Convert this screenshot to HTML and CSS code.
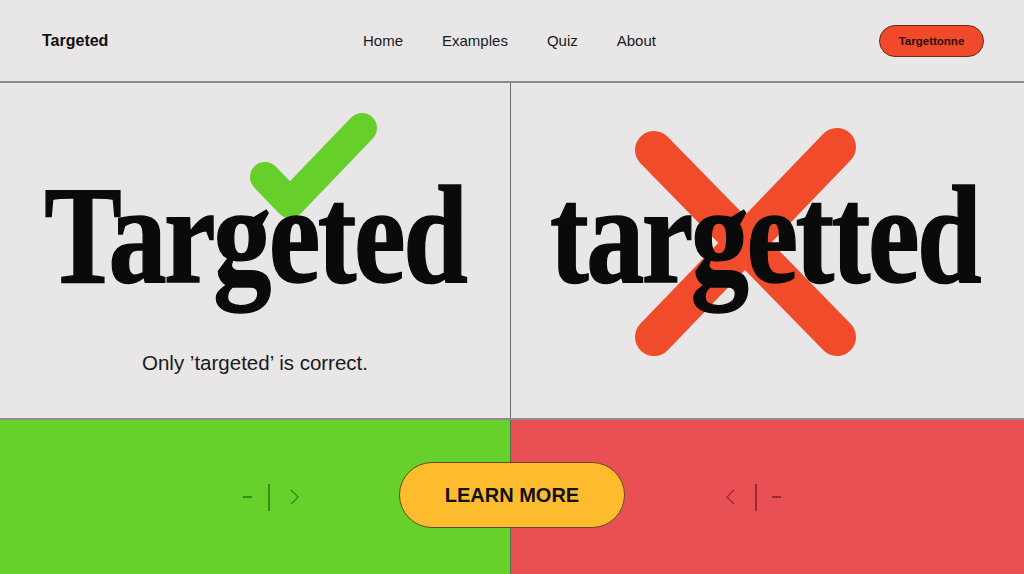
FILE: index.html
```html
<!DOCTYPE html>
<html>
<head>
<meta charset="utf-8">
<link rel="stylesheet" href="styles.css">
</head>
<body>
<div class="page">
  <header class="topbar">
    <div class="brand">Targeted</div>
    <nav class="nav">
      <a>Home</a>
      <a>Examples</a>
      <a>Quiz</a>
      <a>About</a>
    </nav>
    <div class="cta">Targettonne</div>
  </header>
  <main class="panels">
    <section class="panel left">
      <svg class="mark check" viewBox="0 0 160 130" width="160" height="130">
        <path d="M35 84 L60 110 L132 35" fill="none" stroke="#66cf2a" stroke-width="30" stroke-linecap="round" stroke-linejoin="round"/>
      </svg>
      <div class="word">Targeted</div>
      <p class="caption">Only ’targeted’ is correct.</p>
    </section>
    <section class="panel right">
      <svg class="mark cross" viewBox="0 0 245 250" width="245" height="250">
        <path d="M30 33 L213 220 M213 30 L30 220" fill="none" stroke="#f04b2a" stroke-width="38" stroke-linecap="round"/>
      </svg>
      <div class="word">targetted</div>
    </section>
  </main>
  <footer class="band">
    <div class="half green">
      <div class="ctrl">
        <span class="dash"></span>
        <span class="bar"></span>
        <svg class="chev" viewBox="0 0 9 16" width="9" height="16"><polyline points="1,1 8,8 1,15" fill="none" stroke="currentColor" stroke-width="1.4"/></svg>
      </div>
    </div>
    <div class="half red">
      <div class="ctrl">
        <svg class="chev" viewBox="0 0 9 16" width="9" height="16"><polyline points="8,1 1,8 8,15" fill="none" stroke="currentColor" stroke-width="1.4"/></svg>
        <span class="bar"></span>
        <span class="dash"></span>
      </div>
    </div>
    <div class="learn">LEARN MORE</div>
  </footer>
</div>
</body>
</html>
```
FILE: styles.css
```css
* { box-sizing: border-box; }
html, body { margin: 0; padding: 0; }
body {
  width: 1024px;
  height: 574px;
  overflow: hidden;
  background: #e8e6e6;
  font-family: "Liberation Sans", Arial, sans-serif;
  color: #111;
}
.page {
  display: grid;
  grid-template-rows: 83px 337px 154px;
  height: 574px;
}
.topbar {
  display: flex;
  align-items: center;
  padding: 0 40px 0 42px;
  border-bottom: 2px solid #8c8a8a;
}
.brand {
  font-weight: bold;
  font-size: 16px;
  width: 321px;
}
.nav {
  display: flex;
  gap: 39px;
  font-size: 15px;
  flex: 1;
}
.nav a { color: #1a1a1a; }
.cta {
  background: #f04a2a;
  border: 1px solid #6b2a1c;
  border-radius: 16px;
  width: 105px;
  height: 32px;
  display: flex;
  align-items: center;
  justify-content: center;
  font-size: 11.5px;
  font-weight: bold;
  color: #2a0d08;
}
.panels {
  display: grid;
  grid-template-columns: 511px 513px;
  border-bottom: 2px solid #8c8a8a;
}
.panel {
  position: relative;
  display: flex;
  flex-direction: column;
  align-items: center;
}
.panel.left { border-right: 1px solid #6e6c6c; }
.word {
  position: relative;
  margin-top: 77px;
  font-family: "Liberation Serif", "Times New Roman", serif;
  font-weight: bold;
  font-size: 140px;
  line-height: 150px;
  letter-spacing: -3px;
  transform: scaleX(0.83);
  -webkit-text-stroke: 1.5px #0a0a0a;
  white-space: nowrap;
  color: #0a0a0a;
}
.right .word { margin-left: -6px; }
.mark { position: absolute; }
.check { left: 230px; top: 10px; }
.cross { left: 113px; top: 34px; }
.caption {
  margin: 41px 0 0;
  font-size: 20.5px;
  color: #1a1a1a;
}
.band {
  position: relative;
  display: grid;
  grid-template-columns: 511px 513px;
}
.half {
  display: flex;
  align-items: center;
}
.green { background: #66d12a; border-right: 1px solid #5a6a50; }
.red { background: #e95054; }
.ctrl {
  display: flex;
  align-items: center;
}
.green .ctrl { margin-left: 243px; color: #3a8a1a; }
.red .ctrl { margin-left: 215px; color: #9a2a30; }
.dash { width: 9px; height: 1.5px; background: currentColor; }
.bar { width: 1.5px; height: 27px; background: currentColor; }
.green .dash { margin-right: 16px; }
.green .bar { margin-right: 20px; }
.red .chev { margin-right: 20px; }
.red .bar { margin-right: 15px; }
.chev { display: block; }
.learn {
  position: absolute;
  left: 399px;
  top: 42px;
  width: 226px;
  height: 66px;
  border-radius: 33px;
  background: #fcbc2e;
  border: 1px solid #6a4a1a;
  display: flex;
  align-items: center;
  justify-content: center;
  font-weight: bold;
  font-size: 20px;
  color: #111;
}
```
